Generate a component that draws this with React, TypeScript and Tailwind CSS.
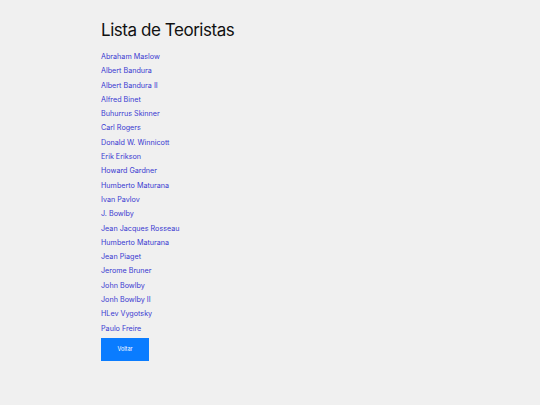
import React from "react";

const names = [
  "Abraham Maslow",
  "Albert Bandura",
  "Albert Bandura II",
  "Alfred Binet",
  "Buhurrus Skinner",
  "Carl Rogers",
  "Donald W. Winnicott",
  "Erik Erikson",
  "Howard Gardner",
  "Humberto Maturana",
  "Ivan Pavlov",
  "J. Bowlby",
  "Jean Jacques Rosseau",
  "Humberto Maturana",
  "Jean Piaget",
  "Jerome Bruner",
  "John Bowlby",
  "Jonh Bowlby II",
  "HLev Vygotsky",
  "Paulo Freire",
];

export default function App() {
  return (
    <div
      className="min-h-[405px] w-full bg-[#f0f0f0] pl-[101px] pt-[19px]"
      style={{ fontFamily: 'Inter, sans-serif' }}
    >
      <h1 className="text-[17px] leading-[22px] tracking-[-0.45px] text-[#111] font-normal">Lista de Teoristas</h1>
      <ul className="mt-[9px] flex flex-col">
        {names.map((n, i) => (
          <li key={i} className="h-[14.3px] text-[7.2px] leading-[14.3px] text-[#3a3ad0]">
            <a href="#">{n}</a>
          </li>
        ))}
      </ul>
      <button className="mt-[2px] flex h-[23px] w-[48px] items-center justify-center bg-[#0a7cff] text-[5.5px] text-white">
        Voltar
      </button>
    </div>
  );
}
